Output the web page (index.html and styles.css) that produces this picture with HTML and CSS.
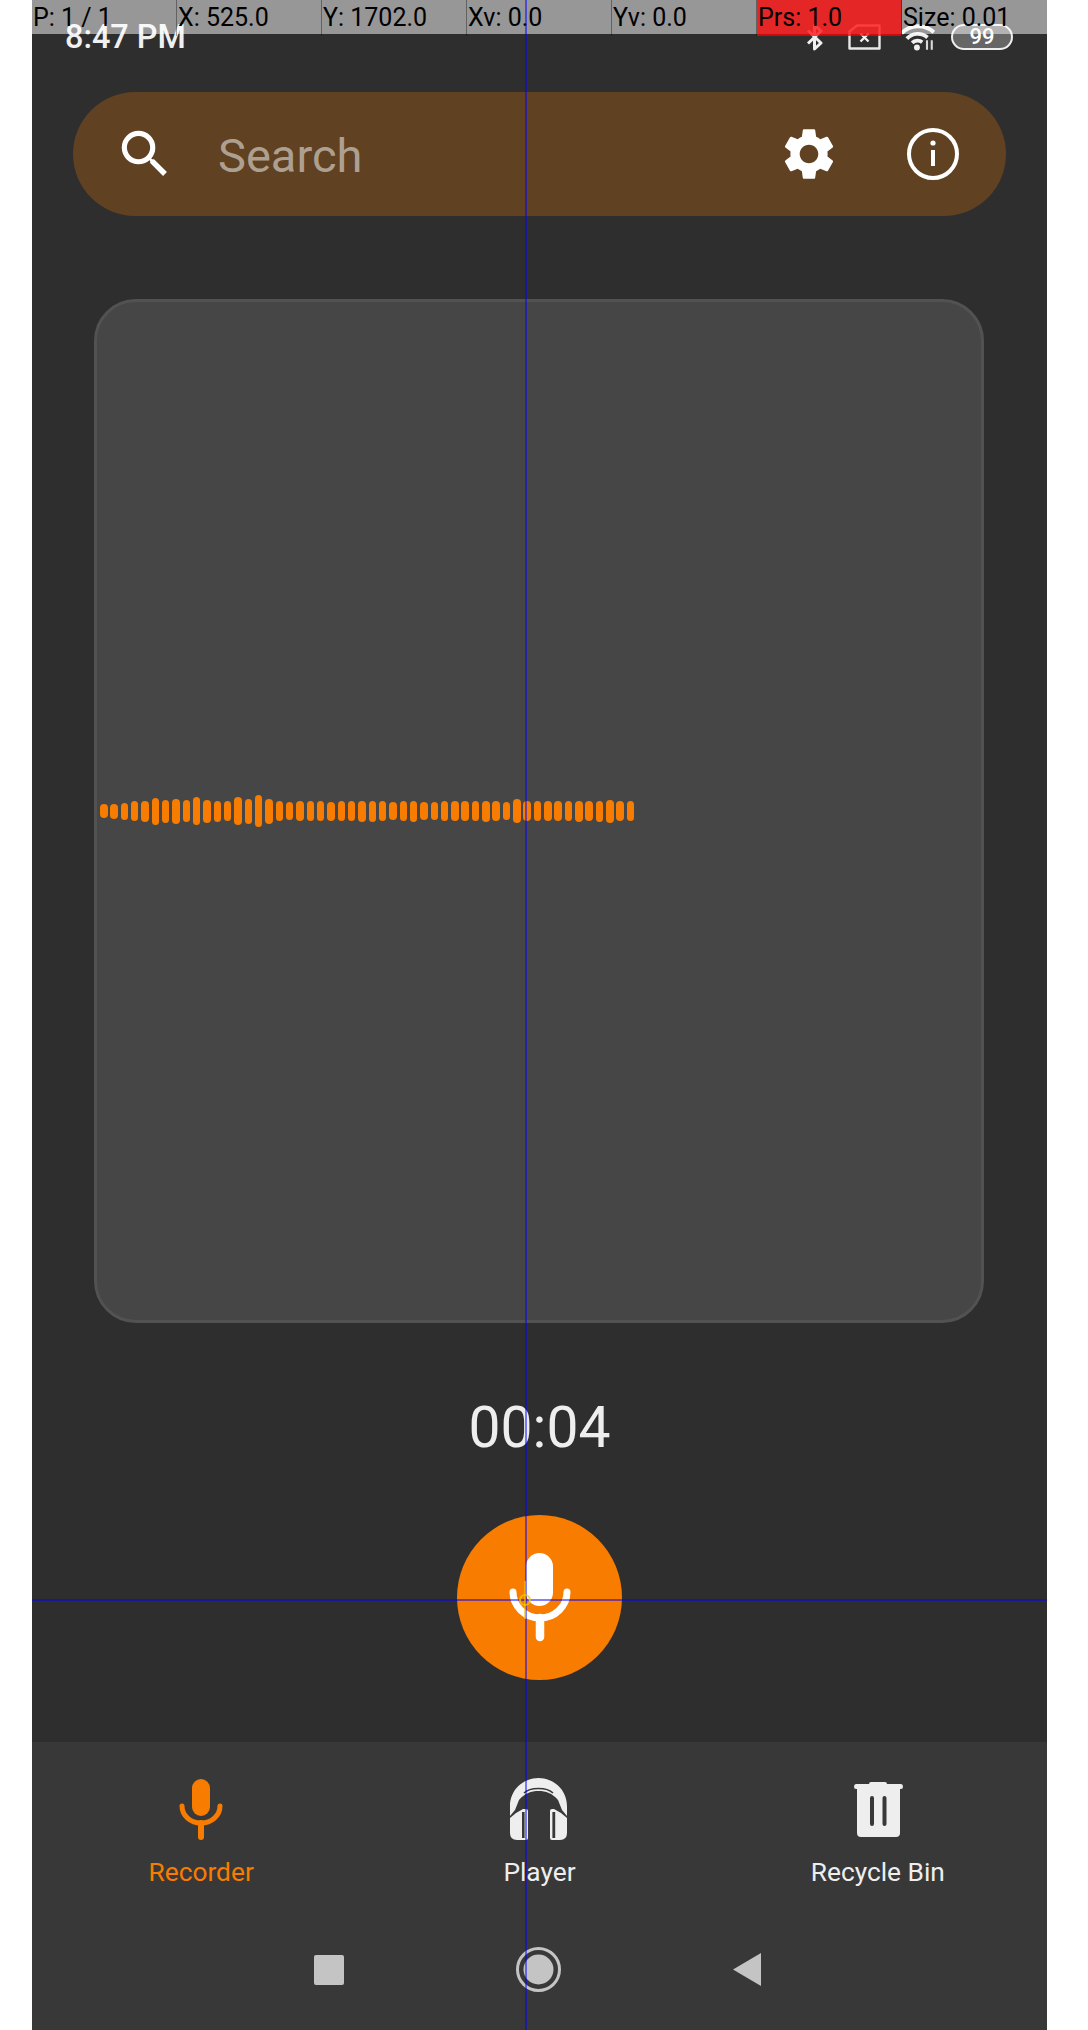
FILE: index.html
```html
<!DOCTYPE html>
<html lang="en">
<head>
  <meta charset="utf-8" />
  <meta name="viewport" content="width=device-width, initial-scale=1" />
  <title>Recorder</title>
  <link rel="stylesheet" href="styles.css">
</head>
<body>
  <div class="phone">
    <!-- status bar -->
    <div class="status-bar">
      <span class="clock">8:47 PM</span>
      <div class="status-icons">
        <svg class="icon-bt" viewBox="0 0 18 28" width="18" height="28"><path d="M2 7.5 L15 20 L8.5 26 V2 L15 8 L2 20.5" fill="none" stroke="#f0f0f0" stroke-width="3" stroke-linejoin="round"/></svg>
        <svg class="icon-sim" viewBox="0 0 33 26" width="33" height="26"><path d="M9 1.5 H31.5 V24.5 H1.5 V7.5 Z" fill="none" stroke="#e8e8e8" stroke-width="2.4" stroke-linejoin="round"/><path d="M12.5 9.5 L20.5 17.5 M20.5 9.5 L12.5 17.5" stroke="#f0f0f0" stroke-width="2.4"/></svg>
        <svg class="icon-wifi" viewBox="0 0 34 26" width="36" height="28"><path d="M1.5 9.5 A22 22 0 0 1 32 8.5 M6.5 14.5 A14 14 0 0 1 26 13.5 M11.5 18.5 A7 7 0 0 1 21 18" fill="none" stroke="#f0f0f0" stroke-width="3.6"/><circle cx="16" cy="23" r="2.8" fill="#f0f0f0"/><path d="M25.5 16 V25 M30 16 V25" stroke="#d8d8d8" stroke-width="2"/></svg>
        <div class="battery">99</div>
      </div>
    </div>

    <!-- search -->
    <div class="search-bar">
      <svg viewBox="0 0 24 24" width="62" height="62"><path fill="#fff" d="M15.5 14h-.79l-.28-.27A6.471 6.471 0 0 0 16 9.5 6.5 6.5 0 1 0 9.5 16c1.61 0 3.09-.59 4.23-1.57l.27.28v.79l5 4.99L20.49 19l-4.99-5zm-6 0C7.01 14 5 11.99 5 9.5S7.01 5 9.5 5 14 7.01 14 9.5 11.99 14 9.5 14z"/></svg>
      <span class="search-text">Search</span>
      <svg viewBox="0 0 24 24" width="62" height="62"><path fill="#fff" d="M19.14 12.94c.04-.3.06-.61.06-.94s-.02-.64-.07-.94l2.03-1.58a.49.49 0 0 0 .12-.61l-1.92-3.32a.488.488 0 0 0-.59-.22l-2.39.96c-.5-.38-1.03-.7-1.62-.94l-.36-2.54a.484.484 0 0 0-.48-.41h-3.84c-.24 0-.43.17-.47.41l-.36 2.54c-.59.24-1.13.57-1.62.94l-2.39-.96c-.22-.08-.47 0-.59.22L2.74 8.87c-.12.21-.08.47.12.61l2.03 1.58c-.05.3-.09.63-.09.94s.02.64.07.94l-2.03 1.58a.49.49 0 0 0-.12.61l1.92 3.32c.12.22.37.29.59.22l2.39-.96c.5.38 1.03.7 1.62.94l.36 2.54c.05.24.24.41.48.41h3.84c.24 0 .44-.17.47-.41l.36-2.54c.59-.24 1.13-.56 1.62-.94l2.39.96c.22.08.47 0 .59-.22l1.92-3.32c.12-.22.07-.47-.12-.61l-2.01-1.58zM12 15.6c-1.98 0-3.6-1.62-3.6-3.6s1.62-3.6 3.6-3.6 3.6 1.62 3.6 3.6-1.62 3.6-3.6 3.6z"/></svg>
      <svg class="info" viewBox="0 0 62 62" width="62" height="62"><circle cx="31" cy="31" r="24" fill="none" stroke="#fff" stroke-width="4"/><circle cx="31" cy="20" r="2.6" fill="#fff"/><path d="M31 27 V43" stroke="#fff" stroke-width="4"/></svg>
    </div>

    <!-- waveform card -->
    <div class="wave-card">
      <div class="wave">
        <span style="height:14px"></span><span style="height:15px"></span><span style="height:17px"></span><span style="height:20px"></span>
        <span style="height:21px"></span><span style="height:27px"></span><span style="height:23px"></span><span style="height:25px"></span>
        <span style="height:22px"></span><span style="height:28px"></span><span style="height:23px"></span><span style="height:21px"></span>
        <span style="height:20px"></span><span style="height:28px"></span><span style="height:25px"></span><span style="height:32px"></span>
        <span style="height:25px"></span><span style="height:20px"></span><span style="height:18px"></span><span style="height:20px"></span>
        <span style="height:20px"></span><span style="height:20px"></span><span style="height:19px"></span><span style="height:20px"></span>
        <span style="height:20px"></span><span style="height:21px"></span><span style="height:21px"></span><span style="height:20px"></span>
        <span style="height:18px"></span><span style="height:20px"></span><span style="height:21px"></span><span style="height:18px"></span>
        <span style="height:18px"></span><span style="height:20px"></span><span style="height:20px"></span><span style="height:20px"></span>
        <span style="height:20px"></span><span style="height:21px"></span><span style="height:20px"></span><span style="height:18px"></span>
        <span style="height:24px"></span><span style="height:20px"></span><span style="height:20px"></span><span style="height:20px"></span>
        <span style="height:20px"></span><span style="height:20px"></span><span style="height:21px"></span><span style="height:20px"></span>
        <span style="height:21px"></span><span style="height:23px"></span><span style="height:20px"></span><span style="height:20px"></span>
      </div>
    </div>

    <div class="timer">00:04</div>

    <div class="record-btn">
      <svg viewBox="0 0 165 165" width="165" height="165">
        <rect x="69" y="38" width="27" height="53" rx="13.5" fill="#fff"/>
        <path d="M56 77 A27 26 0 0 0 110 77" fill="none" stroke="#fff" stroke-width="7" stroke-linecap="round"/>
        <path d="M83 103 V122" stroke="#fff" stroke-width="8.500" stroke-linecap="round"/>
      </svg>
    </div>

    <!-- bottom navigation -->
    <div class="bottom">
      <div class="tabs">
        <div class="tab active">
          <svg viewBox="0 8 62 64" width="62" height="64">
            <rect x="22" y="9" width="18" height="37" rx="9" fill="#f87c00"/>
            <path d="M12 36 A19 17 0 0 0 50 36" fill="none" stroke="#f87c00" stroke-width="5" stroke-linecap="round"/>
            <path d="M31 53 V67" stroke="#f87c00" stroke-width="6" stroke-linecap="round"/>
          </svg>
          <span>Recorder</span>
        </div>
        <div class="tab">
          <svg viewBox="0 8 78 64" width="78" height="64">
            <path fill="#eee" d="M10 46 V36 C10 20 23 8 38.500 8 C54 8 67 20 67 36 V46 L62 40 L58 30 C52 23 46 21 38.500 21 C31 21 25 23 19 30 L15 40 Z"/>
            <path d="M24 23 C30 17 47 17 53 23" fill="none" stroke="#383838" stroke-width="1.600"/>
            <path fill="#eee" d="M10 48 L16 43 L23 39 H26 Q28 39 28 41 V68 Q28 70 26 70 H17 Q10 70 10 63 Z"/>
            <path fill="#eee" d="M67 48 L61 43 L54 39 H52 Q50 39 50 41 V68 Q50 70 52 70 H60 Q67 70 67 63 Z"/>
            <rect x="22" y="42" width="2.600" height="26" fill="#383838"/>
            <rect x="52.400" y="42" width="2.800" height="26" fill="#383838"/>
          </svg>
          <span>Player</span>
        </div>
        <div class="tab">
          <svg viewBox="0 8 64 64" width="64" height="64">
            <path fill="#eee" fill-rule="evenodd" d="M23 14 Q23 12 25 12 H39 Q41 12 41 14 H55 Q57 14 57 16.500 Q57 19 55 19 H54 V63 Q54 67 50 67 H15 Q11 67 11 63 V19 H10 Q8 19 8 16.500 Q8 14 10 14 Z M24 28 V54 Q24 56 26 56 Q28 56 28 54 V28 Q28 26 26 26 Q24 26 24 28 Z M36.500 28 V54 Q36.500 56 38.500 56 Q40.500 56 40.500 54 V28 Q40.500 26 38.500 26 Q36.500 26 36.500 28 Z"/>
          </svg>
          <span>Recycle Bin</span>
        </div>
      </div>
      <div class="sys-nav">
        <div class="sys-square"></div>
        <svg viewBox="0 0 45 45" width="45" height="45"><circle cx="22.500" cy="22.500" r="21" fill="none" stroke="#c4c4c4" stroke-width="3"/><circle cx="22.500" cy="22.500" r="15" fill="#c4c4c4"/></svg>
        <svg viewBox="0 0 28 33" width="28" height="33"><path d="M28 0 V33 L0 16.500 Z" fill="#c4c4c4"/></svg>
      </div>
    </div>

    <!-- pointer location overlay -->
    <div class="pointer-bar">
      <div class="cell">P: 1 / 1</div>
      <div class="cell">X: 525.0</div>
      <div class="cell">Y: 1702.0</div>
      <div class="cell">Xv: 0.0</div>
      <div class="cell">Yv: 0.0</div>
      <div class="cell level">Prs: 1.0</div>
      <div class="cell">Size: 0.01</div>
    </div>
    <div class="cross-v"></div>
    <div class="cross-h"></div>
    <div class="trail"></div>
    <div class="touch-dot"></div>
  </div>
</body>
</html>
```

FILE: styles.css
```css
body {
  margin: 0;
  background: #fff;
  font-family: Roboto, "Liberation Sans", sans-serif;
}
.phone {
  position: relative;
  display: flex;
  flex-direction: column;
  width: 1015px;
  height: 2030px;
  margin-left: 32px;
  background: #2e2e2e;
  overflow: hidden;
}

/* status bar */
.status-bar {
  display: flex;
  justify-content: space-between;
  align-items: flex-start;
  height: 92px;
  box-sizing: border-box;
  padding: 17px 34px 0 33px;
}
.clock {
  font-size: 32.4px;
  line-height: 40px;
  font-weight: 500;
  color: #f0f0f0;
}
.status-icons {
  display: flex;
  align-items: center;
  height: 29px;
  margin-top: 5px;
}
.icon-sim {
  margin-left: 24px;
}
.icon-wifi {
  margin-left: 19px;
}
.battery {
  width: 62px;
  height: 26px;
  box-sizing: border-box;
  margin-left: 15px;
  border: 2.5px solid #eee;
  border-radius: 13px;
  background: #666;
  color: #fff;
  font-size: 22px;
  line-height: 21px;
  font-weight: 500;
  text-align: center;
}

/* search */
.search-bar {
  display: flex;
  align-items: center;
  height: 124px;
  margin: 0 41px;
  padding: 0 42px 0 41px;
  border-radius: 62px;
  background: #604122;
}
.search-text {
  flex: 1;
  margin-left: 42px;
  padding-top: 3px;
  font-size: 47px;
  color: #ada090;
}
.info {
  margin-left: 62px;
}

/* waveform */
.wave-card {
  display: flex;
  align-items: center;
  box-sizing: border-box;
  height: 1024px;
  margin: 83px 63px 0 62px;
  padding-left: 3px;
  border: 3px solid #525252;
  border-radius: 42px;
  background: #464646;
}
.wave {
  display: flex;
  align-items: center;
  gap: 2.83px;
}
.wave span {
  width: 7.5px;
  border-radius: 4px;
  background: #f87c00;
}

.timer {
  margin-top: 72px;
  height: 66px;
  line-height: 66px;
  font-size: 57px;
  text-align: center;
  color: #eee;
}
.record-btn {
  align-self: center;
  width: 165px;
  height: 165px;
  margin-top: 54px;
  border-radius: 50%;
  background: #f87c00;
}
.record-btn svg {
  display: block;
}

/* bottom navigation */
.bottom {
  margin-top: auto;
  height: 288px;
  background: #383838;
}
.tabs {
  display: grid;
  grid-template-columns: repeat(3, 1fr);
  padding-top: 36px;
}
.tab {
  display: flex;
  flex-direction: column;
  align-items: center;
  font-size: 26.3px;
  line-height: 30px;
  color: #eee;
}
.tab svg {
  display: block;
  margin-bottom: 15px;
}
.tab.active {
  color: #f87c00;
}
.sys-nav {
  display: flex;
  align-items: center;
  gap: 172px;
  height: 45px;
  margin-top: 60px;
  padding-left: 282px;
}
.sys-square {
  width: 30px;
  height: 30px;
  border-radius: 2px;
  background: #c4c4c4;
}

/* pointer location overlay */
.pointer-bar {
  position: absolute;
  top: 0;
  left: 0;
  right: 0;
  display: grid;
  grid-template-columns: repeat(7, 1fr);
  height: 34px;
  background: rgba(255, 255, 255, 0.5);
}
.cell {
  padding-left: 1px;
  border-right: 1px solid rgba(0, 0, 0, 0.35);
  font-size: 25px;
  line-height: 36px;
  color: #000;
  white-space: nowrap;
}
.cell:last-child {
  border-right: 0;
}
.level {
  background: rgba(255, 0, 0, 0.75);
}
.cross-v {
  position: absolute;
  top: 0;
  bottom: 0;
  left: 493px;
  width: 1.5px;
  background: rgba(0, 0, 255, 0.5);
}
.cross-h {
  position: absolute;
  top: 1599px;
  left: 0;
  right: 0;
  height: 1.5px;
  background: rgba(0, 0, 255, 0.5);
}
.trail {
  position: absolute;
  top: 1581px;
  left: 492px;
  width: 1.5px;
  height: 38px;
  background: rgba(240, 200, 0, 0.6);
}
.touch-dot {
  position: absolute;
  top: 1594px;
  left: 487px;
  width: 8px;
  height: 8px;
  border: 2px solid rgba(240, 200, 0, 0.75);
  border-radius: 50%;
}
```
